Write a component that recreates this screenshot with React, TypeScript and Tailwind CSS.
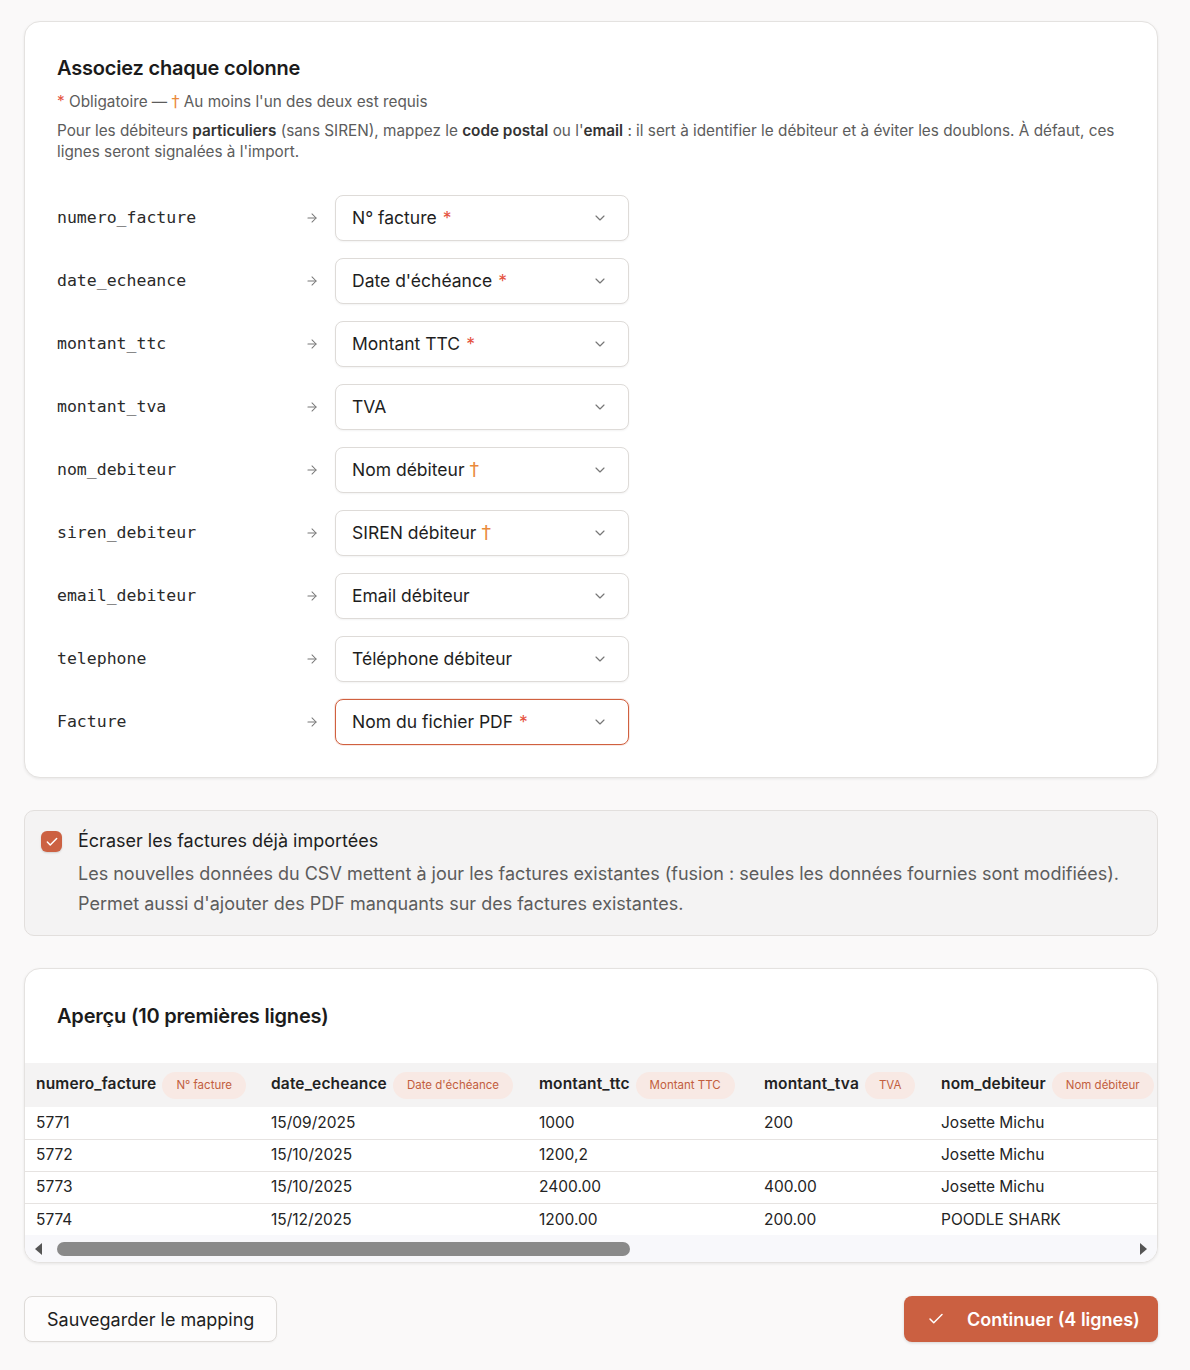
import { Check, ChevronDown, ArrowRight } from 'lucide-react'

const mappings = [
  { source: 'numero_facture', target: 'N° facture', mark: 'required' },
  { source: 'date_echeance', target: "Date d'échéance", mark: 'required' },
  { source: 'montant_ttc', target: 'Montant TTC', mark: 'required' },
  { source: 'montant_tva', target: 'TVA', mark: '' },
  { source: 'nom_debiteur', target: 'Nom débiteur', mark: 'oneOf' },
  { source: 'siren_debiteur', target: 'SIREN débiteur', mark: 'oneOf' },
  { source: 'email_debiteur', target: 'Email débiteur', mark: '' },
  { source: 'telephone', target: 'Téléphone débiteur', mark: '' },
  { source: 'Facture', target: 'Nom du fichier PDF', mark: 'required', active: true },
]

const columns = [
  { key: 'numero_facture', badge: 'N° facture', width: 'w-[235px]' },
  { key: 'date_echeance', badge: "Date d'échéance", width: 'w-[268px]' },
  { key: 'montant_ttc', badge: 'Montant TTC', width: 'w-[225px]' },
  { key: 'montant_tva', badge: 'TVA', width: 'w-[177px]' },
  { key: 'nom_debiteur', badge: 'Nom débiteur', width: 'w-[240px]' },
]

const rows = [
  ['5771', '15/09/2025', '1000', '200', 'Josette Michu'],
  ['5772', '15/10/2025', '1200,2', '', 'Josette Michu'],
  ['5773', '15/10/2025', '2400.00', '400.00', 'Josette Michu'],
  ['5774', '15/12/2025', '1200.00', '200.00', 'POODLE SHARK'],
]

const sans = "font-['Inter','Noto_Sans',sans-serif]"

export default function App() {
  return (
    <div className={`min-h-[1370px] bg-[#faf9f9] pl-6 pt-[21px] pb-8 ${sans}`}>
      <div className="w-[1134px] flex flex-col gap-8">
        {/* Mapping card */}
        <div className="bg-white border border-[#e4e2e0] rounded-2xl shadow-[0_1px_3px_rgba(0,0,0,0.08)] px-8 pt-8 pb-[32px]">
          <h2 className="text-[20px] leading-7 font-semibold text-[#1b1b1b] tracking-[-0.01em]">Associez chaque colonne</h2>
          <p className="mt-[9px] text-[15.3px] leading-[22px] text-[#5c5c5c]">
            <span className="text-[#e5533f]">*</span> Obligatoire —{' '}
            <span className="text-[#ea8a3b] font-['DejaVu_Sans',sans-serif] text-[16px]">†</span> Au moins l'un des deux est requis
          </p>
          <p className="mt-[7px] text-[15.3px] leading-[21px] text-[#5c5c5c]">
            Pour les débiteurs <b className="font-semibold text-[#333]">particuliers</b> (sans SIREN), mappez le{' '}
            <b className="font-semibold text-[#333]">code postal</b> ou l'<b className="font-semibold text-[#333]">email</b> : il sert à
            identifier le débiteur et à éviter les doublons. À défaut, ces lignes seront signalées à l'import.
          </p>

          <div className="mt-[33px] flex flex-col gap-[17px]">
            {mappings.map((m) => (
              <div key={m.source} className="flex items-center">
                <span className="w-[245px] font-['DejaVu_Sans_Mono',monospace] text-[16.5px] text-[#2a2a2a]">{m.source}</span>
                <ArrowRight className="w-[14px] h-[14px] text-[#777] ml-[3px]" strokeWidth={1.75} />
                <div
                  className={`ml-[16px] w-[294px] h-[46px] rounded-lg bg-white flex items-center justify-between pl-[16px] pr-[20px] ${
                    m.active
                      ? 'border-[1.5px] border-[#d0603f] shadow-[0_0_0_1px_rgba(208,96,63,0.15)]'
                      : 'border border-[#dedbd8] shadow-[0_1px_2px_rgba(0,0,0,0.05)]'
                  }`}
                >
                  <span className="text-[17.5px] text-[#1e1e1e]">
                    {m.target}
                    {m.mark === 'required' && <span className="text-[#e5533f] ml-[6px]">*</span>}
                    {m.mark === 'oneOf' && (
                      <span className="text-[#ea8a3b] ml-[5px] font-['DejaVu_Sans',sans-serif] text-[19px] leading-none">†</span>
                    )}
                  </span>
                  <ChevronDown className="w-[16px] h-[16px] text-[#777]" strokeWidth={1.75} />
                </div>
              </div>
            ))}
          </div>
        </div>

        {/* Overwrite option */}
        <div className="bg-[#f4f3f3] border border-[#e2dfdd] rounded-[10px] pl-4 pr-6 pt-[18px] pb-[16px] flex gap-[16px]">
          <div className="mt-[2px] w-[21px] h-[21px] shrink-0 rounded-[6px] bg-[#cc6142] flex items-center justify-center shadow-[0_1px_2px_rgba(0,0,0,0.15)]">
            <Check className="w-[14px] h-[14px] text-white" strokeWidth={2.5} />
          </div>
          <div>
            <div className="text-[18px] leading-[24px] text-[#1e1e1e]">Écraser les factures déjà importées</div>
            <p className="mt-[6px] text-[18px] leading-[30px] text-[#5c5c5c]">
              Les nouvelles données du CSV mettent à jour les factures existantes (fusion : seules les données fournies sont modifiées).
              <br />
              Permet aussi d'ajouter des PDF manquants sur des factures existantes.
            </p>
          </div>
        </div>

        {/* Preview */}
        <div className="bg-white border border-[#e4e2e0] rounded-2xl shadow-[0_1px_3px_rgba(0,0,0,0.08)] overflow-hidden">
          <h2 className="px-8 pt-[33px] text-[20px] leading-7 font-semibold text-[#1b1b1b] tracking-[-0.01em]">Aperçu (10 premières lignes)</h2>
          <div className="mt-[33px] overflow-hidden">
            <table className="table-fixed border-collapse w-[1145px]">
              <thead>
                <tr className="bg-[#f4f3f3] h-[44px]">
                  {columns.map((c) => (
                    <th key={c.key} className={`${c.width} px-[11px] text-left font-normal whitespace-nowrap`}>
                      <span className="text-[15.5px] font-semibold text-[#222] tracking-[0.01em]">{c.key}</span>
                      <span className="ml-[6px] inline-block align-middle rounded-full bg-[#f8e9e4] text-[#c25e3e] text-[11.5px] leading-[27px] px-[14px]">
                        {c.badge}
                      </span>
                    </th>
                  ))}
                </tr>
              </thead>
              <tbody>
                {rows.map((r, i) => (
                  <tr key={i} className={`h-[32px] ${i < rows.length - 1 ? 'border-b border-[#e6e3e1]' : ''}`}>
                    {r.map((v, j) => (
                      <td key={j} className="px-[11px] text-[15.5px] text-[#242424] whitespace-nowrap">{v}</td>
                    ))}
                  </tr>
                ))}
              </tbody>
            </table>
          </div>
          {/* horizontal scrollbar */}
          <div className="h-[27px] bg-[#f8f8fb] flex items-center px-[8px] gap-[14px]">
            <svg width="10" height="14" viewBox="0 0 10 14"><path d="M9 1 L2 7 L9 13 Z" fill="#555" /></svg>
            <div className="w-[573px] h-[14px] rounded-full bg-[#8a8a8a]" />
            <div className="flex-1" />
            <svg width="10" height="14" viewBox="0 0 10 14"><path d="M1 1 L8 7 L1 13 Z" fill="#555" /></svg>
          </div>
        </div>

        {/* Actions */}
        <div className="flex items-center justify-between mt-[1px]">
          <button className="h-[46px] px-[22px] rounded-lg border border-[#dedbd8] bg-[#fdfcfc] text-[18px] text-[#1e1e1e] shadow-[0_1px_2px_rgba(0,0,0,0.04)]">
            Sauvegarder le mapping
          </button>
          <button className="h-[46px] w-[254px] pl-[23px] rounded-lg bg-[#cb6041] text-white text-[18px] font-semibold flex items-center gap-[22px] shadow-[0_1px_3px_rgba(0,0,0,0.15)]">
            <Check className="w-[18px] h-[18px]" strokeWidth={2} />
            Continuer (4 lignes)
          </button>
        </div>
      </div>
    </div>
  )
}
